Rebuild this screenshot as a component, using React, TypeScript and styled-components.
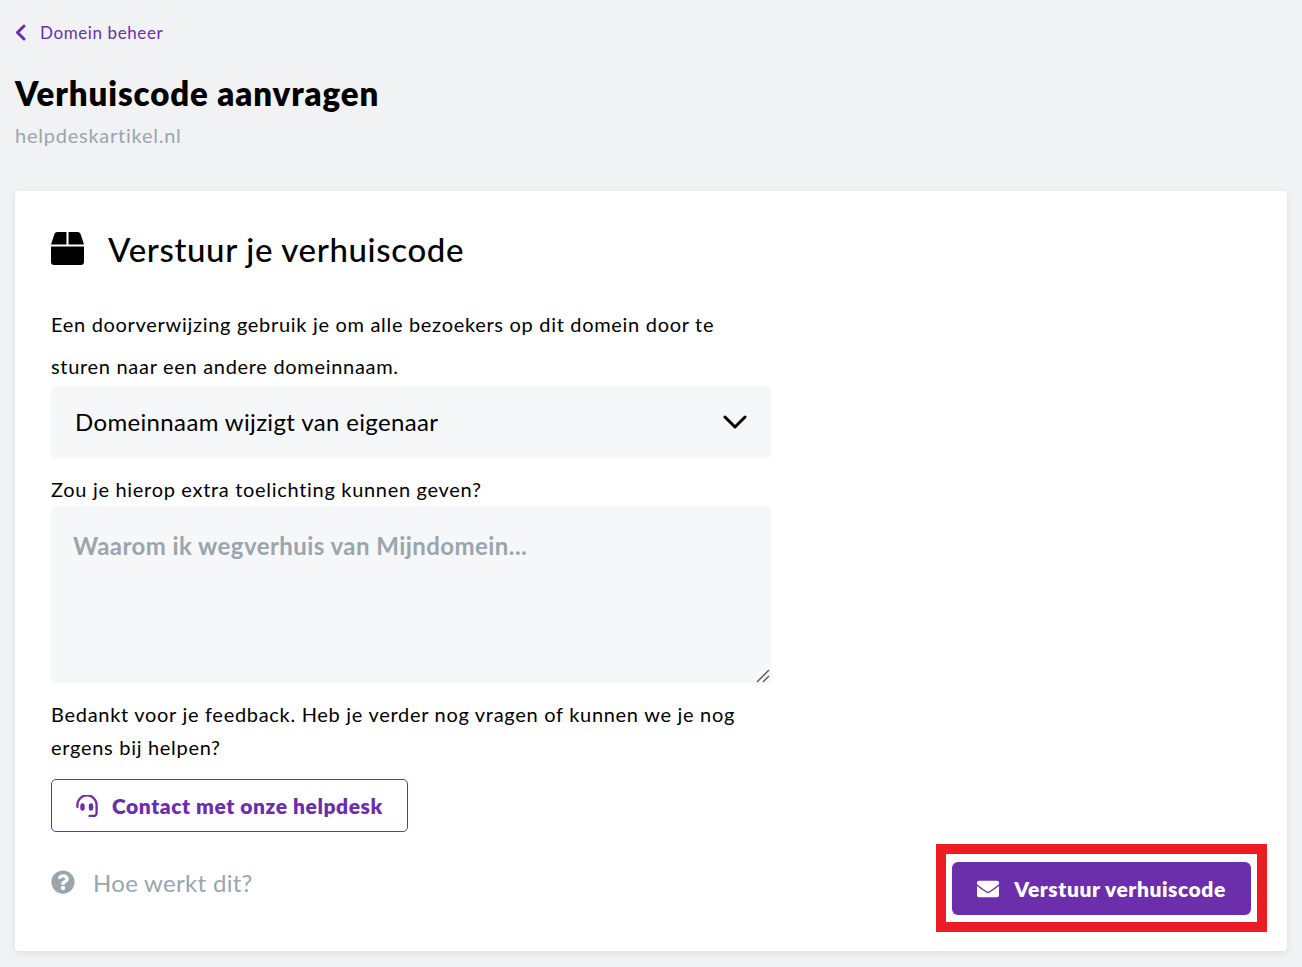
import { FC } from 'react';
import { FaBox, FaEnvelope, FaQuestionCircle } from 'react-icons/fa';
import styled, { createGlobalStyle } from 'styled-components';

const GlobalStyle = createGlobalStyle`
  * {
    box-sizing: border-box;
  }

  body {
    margin: 0;
    background: #f1f2f4;
    color: #000;
    font-family: Lato, 'Open Sans', sans-serif;
  }
`;

const Page = styled.div`
  width: 1302px;
  height: 967px;
  padding: 23px 15px 16px;
  overflow: hidden;
`;

const BackLink = styled.a`
  display: flex;
  align-items: center;
  gap: 14px;
  height: 20px;
  color: #6c2eab;
  font-size: 17px;
  line-height: 20px;
  letter-spacing: 0.6px;

  svg {
    width: 11px;
    height: 17px;
    margin-top: -1px;
  }
`;

const Title = styled.h1`
  margin: 29px 0 0;
  font-size: 33px;
  line-height: 42px;
  font-weight: 800;
  letter-spacing: 0.9px;
`;

const Domain = styled.p`
  margin: 9px 0 0;
  color: #9aa5ad;
  font-size: 20px;
  line-height: 24px;
  letter-spacing: 0.76px;
`;

const Card = styled.section`
  height: 760px;
  margin-top: 44px;
  padding: 35px 36px 19px;
  border-radius: 4px;
  background: #fff;
  box-shadow: 0 2px 6px rgba(40, 50, 60, 0.1);
  display: flex;
  flex-direction: column;
`;

const CardHeader = styled.div`
  display: flex;
  align-items: center;
  gap: 24px;
  height: 46px;

  svg {
    width: 33px;
    height: 33px;
    margin-top: -2px;
  }
`;

const CardTitle = styled.h2`
  margin: 0;
  font-size: 33px;
  line-height: 46px;
  font-weight: 500;
  letter-spacing: 0.65px;
`;

const Content = styled.div`
  width: 720px;
  flex: 1;
`;

const Intro = styled.p`
  margin: 31px 0 0;
  font-size: 20px;
  line-height: 42px;
  letter-spacing: 0.69px;
`;

const Select = styled.div`
  display: flex;
  align-items: center;
  justify-content: space-between;
  height: 72px;
  margin-top: -1px;
  padding: 0 24px 2px;
  border-radius: 4px;
  background: #f6f7f9;
  font-size: 24px;
  letter-spacing: 0.35px;

  svg {
    width: 24px;
    height: 16px;
    margin-top: 2px;
  }
`;

const FieldLabel = styled.p`
  margin: 19px 0 0;
  font-size: 20px;
  line-height: 24px;
  letter-spacing: 0.69px;
`;

const TextArea = styled.div`
  position: relative;
  height: 177px;
  margin-top: 5px;
  padding: 24px 22px;
  border-radius: 4px;
  background: #f6f7f9;
  color: #9aa5ad;
  font-size: 24px;
  line-height: 32px;
  font-weight: 700;
  letter-spacing: 0.44px;

  svg {
    position: absolute;
    right: 1px;
    bottom: 0;
    width: 14px;
    height: 14px;
  }
`;

const Feedback = styled.p`
  margin: 15px 0 0;
  font-size: 20px;
  line-height: 33px;
  letter-spacing: 0.7px;
`;

const ContactButton = styled.a`
  display: inline-flex;
  align-items: center;
  gap: 14px;
  height: 53px;
  margin-top: 15px;
  padding: 0 24px;
  border: 1px solid #6c2eab;
  border-radius: 5px;
  color: #6c2eab;
  font-size: 21px;
  font-weight: 800;
  letter-spacing: 0.56px;

  svg {
    width: 22px;
    height: 22px;
  }
`;

const Footer = styled.div`
  display: flex;
  align-items: center;
  justify-content: space-between;
`;

const HelpLink = styled.a`
  display: flex;
  align-items: center;
  gap: 18px;
  padding-bottom: 12px;
  color: #9aa5ad;
  font-size: 24px;
  letter-spacing: 0.3px;

  svg {
    width: 24px;
    height: 24px;
  }
`;

const Highlight = styled.div`
  margin-right: -16px;
  padding: 8px 6px 7px;
  border: 10px solid #ed1c24;
`;

const SubmitButton = styled.button`
  display: flex;
  align-items: center;
  justify-content: center;
  gap: 15px;
  width: 299px;
  height: 53px;
  padding: 0;
  border: 0;
  border-radius: 6px;
  background: #6c2eab;
  color: #fff;
  font-family: inherit;
  font-size: 21px;
  font-weight: 800;
  letter-spacing: 0.55px;

  svg {
    width: 22px;
    height: 22px;
  }
`;

const ChevronLeft: FC = () => (
  <svg viewBox="0 0 11 17" fill="none" stroke="currentColor" strokeWidth="3" strokeLinecap="round" strokeLinejoin="round">
    <path d="M9 2L2.5 8.5L9 15" />
  </svg>
);

const HeadsetIcon: FC = () => (
  <svg viewBox="0 0 22 22" fill="none" stroke="currentColor" strokeWidth="2.3" strokeLinecap="round">
    <path d="M1.4 12V10a9.4 9.4 0 0 1 19.2 0v8a3 3 0 0 1-3 3h-4" />
    <path d="M6.5 10.5v3M15 10.5v3" strokeWidth="4.4" />
  </svg>
);

const ChevronDown: FC = () => (
  <svg viewBox="0 0 24 16" fill="none" stroke="#000" strokeWidth="3" strokeLinecap="round" strokeLinejoin="round">
    <path d="M2 3l10 10L22 3" />
  </svg>
);

const ResizeGrip: FC = () => (
  <svg viewBox="0 0 14 14" fill="none" stroke="#555" strokeWidth="1.3">
    <path d="M1 13L13 1M7 13l6-6" />
  </svg>
);

const App: FC = () => (
  <>
    <GlobalStyle />
    <Page>
      <BackLink>
        <ChevronLeft />
        Domein beheer
      </BackLink>
      <Title>Verhuiscode aanvragen</Title>
      <Domain>helpdeskartikel.nl</Domain>
      <Card>
        <CardHeader>
          <FaBox />
          <CardTitle>Verstuur je verhuiscode</CardTitle>
        </CardHeader>
        <Content>
          <Intro>
            Een doorverwijzing gebruik je om alle bezoekers op dit domein door te sturen naar een andere domeinnaam.
          </Intro>
          <Select>
            Domeinnaam wijzigt van eigenaar
            <ChevronDown />
          </Select>
          <FieldLabel>Zou je hierop extra toelichting kunnen geven?</FieldLabel>
          <TextArea>
            Waarom ik wegverhuis van Mijndomein...
            <ResizeGrip />
          </TextArea>
          <Feedback>
            Bedankt voor je feedback. Heb je verder nog vragen of kunnen we je nog ergens bij helpen?
          </Feedback>
          <ContactButton>
            <HeadsetIcon />
            Contact met onze helpdesk
          </ContactButton>
        </Content>
        <Footer>
          <HelpLink>
            <FaQuestionCircle />
            Hoe werkt dit?
          </HelpLink>
          <Highlight>
            <SubmitButton>
              <FaEnvelope />
              Verstuur verhuiscode
            </SubmitButton>
          </Highlight>
        </Footer>
      </Card>
    </Page>
  </>
);

export default App;
